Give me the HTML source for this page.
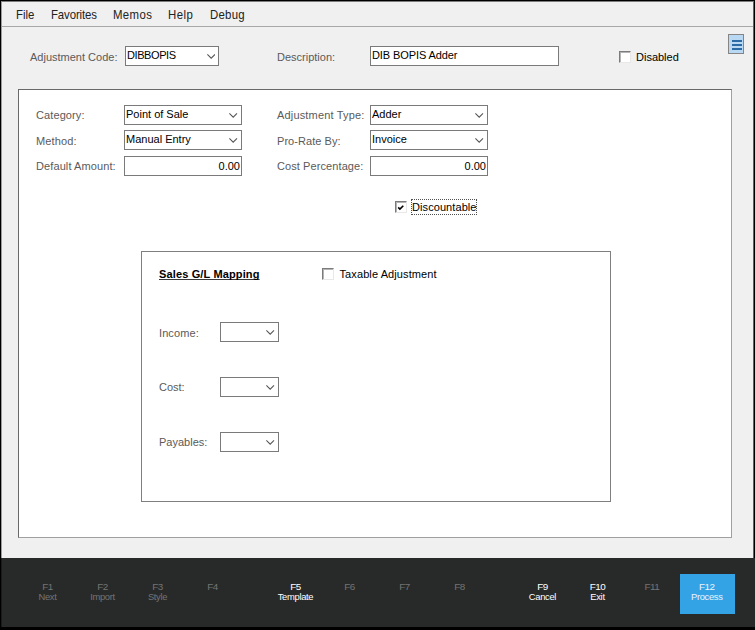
<!DOCTYPE html>
<html><head><meta charset="utf-8">
<style>
html,body{margin:0;padding:0;}
body{width:755px;height:630px;overflow:hidden;background:#000;position:relative;font-family:"Liberation Sans",Arial,sans-serif;font-size:11px;color:#000;}
#win{position:absolute;left:1px;top:1px;width:753px;height:557px;box-sizing:border-box;background:#f0f0f0;border-left:1px solid #9c9c9c;border-top:1px solid #7c7c7c;border-right:1px solid #606060;}
.abs{position:absolute;white-space:nowrap;line-height:13px;}
.lbl{color:#5a5a5a;}
.menu{position:absolute;top:8px;font-size:12.4px;line-height:14px;color:#222;white-space:nowrap;transform:scaleX(0.92);transform-origin:0 0;}
#menuline{position:absolute;left:2px;top:26px;width:751px;height:1px;background:#a9a9a9;}
.box{position:absolute;box-sizing:border-box;background:#fff;border:1px solid #7a7a7a;}
.box span{position:absolute;left:1px;top:2px;line-height:13px;white-space:nowrap;}
.box span.r{left:auto;right:1px;}
.chev{position:absolute;right:3.3px;top:6.3px;width:8.4px;height:4.7px;}
#panel{position:absolute;left:18px;top:89px;width:714px;height:449px;box-sizing:border-box;background:#fff;border:1px solid #a0a0a0;border-top-color:#696969;border-left-color:#696969;}
#inner{position:absolute;left:141px;top:251px;width:470px;height:251px;box-sizing:border-box;background:#fff;border:1px solid #7f7f7f;}
.cb{position:absolute;width:12px;height:12px;box-sizing:border-box;background:#fff;border-top:1px solid #7b7b7b;border-left:1px solid #7b7b7b;border-right:1px solid #e8e8e8;border-bottom:1px solid #e8e8e8;}
.cb:before{content:"";position:absolute;left:0;top:0;right:0;bottom:0;border-top:1px solid #b4b4b4;border-left:1px solid #b4b4b4;}
#bar{position:absolute;left:1px;top:558px;width:754px;height:69px;border-left:1px solid #1a1b1b;box-sizing:border-box;background:#282a29;}
.fk{position:absolute;top:582px;width:55px;text-align:center;font-size:9.4px;letter-spacing:-0.32px;line-height:10px;color:#747474;white-space:nowrap;}
.fk.on{color:#fff;}
.fk .k{font-size:9.9px;letter-spacing:-0.55px;}
#f12{position:absolute;left:680px;top:574px;width:55px;height:40px;background:#33a3e6;}
</style></head><body>
<div id="win"></div>
<div class="menu" style="left:16.4px;letter-spacing:0px">File</div>
<div class="menu" style="left:51px;letter-spacing:-0.12px">Favorites</div>
<div class="menu" style="left:112.7px;letter-spacing:0.4px">Memos</div>
<div class="menu" style="left:168.1px;letter-spacing:0.5px">Help</div>
<div class="menu" style="left:209.5px;letter-spacing:0.3px">Debug</div>
<div id="menuline"></div>

<div class="abs lbl" style="left:30px;top:51px">Adjustment Code:</div>
<div class="box" style="left:125px;top:46px;width:94px;height:20px"><span style="letter-spacing:-0.42px">DIBBOPIS</span><svg class="chev" style="top:6.9px;right:2.6px" viewBox="0 0 9 5"><path d="M0.4 0.4 L4.5 4.5 L8.6 0.4" fill="none" stroke="#555" stroke-width="1.1"/></svg></div>
<div class="abs lbl" style="left:277px;top:51px">Description:</div>
<div class="box" style="left:370px;top:46px;width:189px;height:20px"><span style="letter-spacing:-0.1px">DIB BOPIS Adder</span></div>
<div class="cb" style="left:619px;top:51px"></div>
<div class="abs" style="left:636px;top:51px">Disabled</div>

<svg style="position:absolute;left:728px;top:34px" width="16" height="20" viewBox="0 0 16 20"><rect x="0.5" y="0.5" width="15" height="19" fill="#b9d8f3" stroke="#858585"/><rect x="4" y="6" width="10" height="2" fill="#2a6ba6"/><rect x="4" y="10" width="10" height="2" fill="#2a6ba6"/><rect x="4" y="14" width="10" height="2" fill="#2a6ba6"/></svg>

<div id="panel"></div>

<div class="abs lbl" style="left:36px;top:109px;letter-spacing:0.1px">Category:</div>
<div class="box" style="left:124px;top:105px;width:118px;height:20px"><span style="top:2px">Point of Sale</span><svg class="chev" style="top:7.3px" viewBox="0 0 9 5"><path d="M0.4 0.4 L4.5 4.5 L8.6 0.4" fill="none" stroke="#555" stroke-width="1.1"/></svg></div>
<div class="abs lbl" style="left:36px;top:135px;letter-spacing:0.14px">Method:</div>
<div class="box" style="left:124px;top:130px;width:118px;height:20px"><span style="top:2px">Manual Entry</span><svg class="chev" style="top:7.3px" viewBox="0 0 9 5"><path d="M0.4 0.4 L4.5 4.5 L8.6 0.4" fill="none" stroke="#555" stroke-width="1.1"/></svg></div>
<div class="abs lbl" style="left:36px;top:160px;letter-spacing:0.1px">Default Amount:</div>
<div class="box" style="left:124px;top:156px;width:118px;height:20px"><span class="r" style="top:3px">0.00</span></div>

<div class="abs lbl" style="left:277px;top:109px;letter-spacing:0.17px">Adjustment Type:</div>
<div class="box" style="left:370px;top:105px;width:118px;height:20px"><span style="top:2px">Adder</span><svg class="chev" style="top:7.3px" viewBox="0 0 9 5"><path d="M0.4 0.4 L4.5 4.5 L8.6 0.4" fill="none" stroke="#555" stroke-width="1.1"/></svg></div>
<div class="abs lbl" style="left:277px;top:135px;letter-spacing:0.05px">Pro-Rate By:</div>
<div class="box" style="left:370px;top:130px;width:118px;height:20px"><span style="top:2px">Invoice</span><svg class="chev" style="top:7.3px" viewBox="0 0 9 5"><path d="M0.4 0.4 L4.5 4.5 L8.6 0.4" fill="none" stroke="#555" stroke-width="1.1"/></svg></div>
<div class="abs lbl" style="left:277px;top:160px;letter-spacing:0.09px">Cost Percentage:</div>
<div class="box" style="left:370px;top:156px;width:118px;height:20px"><span class="r" style="top:3px">0.00</span></div>

<div class="cb" style="left:395px;top:201px"><svg style="position:absolute;left:1px;top:1px" width="9" height="9" viewBox="0 0 9 9"><path d="M1.2 4.4 L2.9 6.1 L6.3 2.7" fill="none" stroke="#000" stroke-width="1.6"/></svg></div>
<div class="abs" style="left:412px;top:201px;letter-spacing:0.08px">Discountable</div>
<div style="position:absolute;left:411px;top:199px;width:66px;height:16px;box-sizing:border-box;border:1px dotted #505050"></div>

<div id="inner"></div>
<div class="abs" style="left:159px;top:268px;font-weight:bold;letter-spacing:0.14px;text-decoration:underline;text-decoration-skip-ink:none;text-underline-offset:0.5px;text-decoration-thickness:1px;text-decoration-color:#3a3a3a">Sales G/L Mapping</div>
<div class="cb" style="left:322px;top:268px"></div>
<div class="abs" style="left:339.5px;top:268px;letter-spacing:0.1px">Taxable Adjustment</div>

<div class="abs lbl" style="left:159px;top:327px;letter-spacing:0.1px">Income:</div>
<div class="box" style="left:220px;top:322px;width:59px;height:20px"><svg class="chev" style="top:7.3px" viewBox="0 0 9 5"><path d="M0.4 0.4 L4.5 4.5 L8.6 0.4" fill="none" stroke="#555" stroke-width="1.1"/></svg></div>
<div class="abs lbl" style="left:159px;top:381px">Cost:</div>
<div class="box" style="left:220px;top:377px;width:59px;height:20px"><svg class="chev" style="top:7.3px" viewBox="0 0 9 5"><path d="M0.4 0.4 L4.5 4.5 L8.6 0.4" fill="none" stroke="#555" stroke-width="1.1"/></svg></div>
<div class="abs lbl" style="left:159px;top:436px">Payables:</div>
<div class="box" style="left:220px;top:432px;width:59px;height:20px"><svg class="chev" style="top:7.3px" viewBox="0 0 9 5"><path d="M0.4 0.4 L4.5 4.5 L8.6 0.4" fill="none" stroke="#555" stroke-width="1.1"/></svg></div>

<div id="bar"></div>
<div id="f12"></div>
<div class="fk" style="left:20px"><span class="k">F1</span><br>Next</div>
<div class="fk" style="left:75px"><span class="k">F2</span><br>Import</div>
<div class="fk" style="left:130px"><span class="k">F3</span><br>Style</div>
<div class="fk" style="left:185px"><span class="k">F4</span></div>
<div class="fk on" style="left:268px"><span class="k">F5</span><br>Template</div>
<div class="fk" style="left:322px"><span class="k">F6</span></div>
<div class="fk" style="left:377px"><span class="k">F7</span></div>
<div class="fk" style="left:432px"><span class="k">F8</span></div>
<div class="fk on" style="left:515px"><span class="k">F9</span><br>Cancel</div>
<div class="fk on" style="left:570px"><span class="k">F10</span><br>Exit</div>
<div class="fk" style="left:624.3px"><span class="k">F11</span></div>
<div class="fk on" style="left:679.3px;color:#eaf4fc"><span class="k">F12</span><br>Process</div>
</body></html>
